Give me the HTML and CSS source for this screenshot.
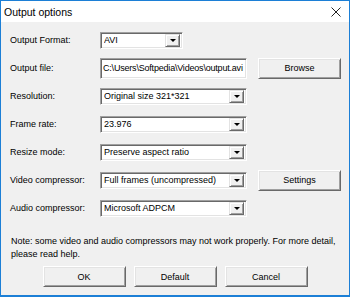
FILE: index.html
```html
<!DOCTYPE html>
<html lang="en">
<head>
    <meta charset="UTF-8">
    <meta name="viewport" content="width=device-width, initial-scale=1.0">
    <title>Output options</title>
    <link rel="stylesheet" href="styles.css">
</head>
<body>
    <div class="window">
        <div class="titlebar">
            <span class="title">Output options</span>
            <svg class="close" width="10" height="10" viewBox="0 0 10 10">
                <path d="M0.5 0.5 L9.5 9.5 M9.5 0.5 L0.5 9.5" stroke="#222" stroke-width="1" fill="none"/>
            </svg>
        </div>
        <div class="content">
            <div class="form">
                <div class="row">
                    <label>Output Format:</label>
                    <div class="combo short"><span class="value">AVI</span><span class="arrow"></span></div>
                </div>
                <div class="row">
                    <label>Output file:</label>
                    <div class="field">C:\Users\Softpedia\Videos\output.avi</div>
                    <button class="btn side">Browse</button>
                </div>
                <div class="row">
                    <label>Resolution:</label>
                    <div class="combo"><span class="value">Original size 321*321</span><span class="arrow"></span></div>
                </div>
                <div class="row">
                    <label>Frame rate:</label>
                    <div class="combo"><span class="value">23.976</span><span class="arrow"></span></div>
                </div>
                <div class="row">
                    <label>Resize mode:</label>
                    <div class="combo"><span class="value">Preserve aspect ratio</span><span class="arrow"></span></div>
                </div>
                <div class="row">
                    <label>Video compressor:</label>
                    <div class="combo"><span class="value">Full frames (uncompressed)</span><span class="arrow"></span></div>
                    <button class="btn side">Settings</button>
                </div>
                <div class="row">
                    <label>Audio compressor:</label>
                    <div class="combo"><span class="value">Microsoft ADPCM</span><span class="arrow"></span></div>
                </div>
            </div>
            <p class="note">Note: some video and audio compressors may not work properly. For more detail, please read help.</p>
            <div class="actions">
                <button class="btn">OK</button>
                <button class="btn">Default</button>
                <button class="btn">Cancel</button>
            </div>
        </div>
    </div>
</body>
</html>
```

FILE: styles.css
```css
* {
    box-sizing: border-box;
}
body {
    margin: 0;
    font-family: "Liberation Sans", Arial, sans-serif;
    font-size: 9px;
    color: #000;
}
.window {
    width: 350px;
    height: 297px;
    border: 1px solid #1c7fd6;
    border-bottom-width: 2px;
    background: #f0f0f0;
    display: flex;
    flex-direction: column;
}
.titlebar {
    height: 21px;
    background: #fff;
    display: flex;
    align-items: center;
    justify-content: space-between;
    padding: 0 8px 0 3px;
}
.title {
    font-size: 10.5px;
}
.close {
    display: block;
}
.content {
    flex: 1;
    padding: 4px 0 0 9px;
}
.row {
    height: 28px;
    display: flex;
    align-items: center;
}
.row label {
    width: 90px;
}
.combo {
    width: 147px;
    height: 17px;
    background: #fff;
    border: 1px solid;
    border-color: #a0a0a0 #fff #fff #a0a0a0;
    box-shadow: inset 1px 1px #696969, inset -1px -1px #e3e3e3;
    display: flex;
    align-items: center;
    padding: 0 2px 0 3px;
}
.combo.short {
    width: 83px;
}
.value {
    flex: 1;
    white-space: nowrap;
    overflow: hidden;
}
.arrow {
    width: 15px;
    height: 13px;
    background: #f0f0f0;
    border: 1px solid;
    border-color: #e3e3e3 #696969 #696969 #e3e3e3;
    box-shadow: inset 1px 1px #fff, inset -1px -1px #a0a0a0;
    position: relative;
}
.arrow::after {
    content: "";
    position: absolute;
    left: 4px;
    top: 4px;
    border-left: 3px solid transparent;
    border-right: 3px solid transparent;
    border-top: 3px solid #000;
}
.field {
    width: 147px;
    height: 21px;
    background: #fff;
    border: 1px solid;
    border-color: #a0a0a0 #fff #fff #a0a0a0;
    box-shadow: inset 1px 1px #696969, inset -1px -1px #e3e3e3;
    padding: 0 1px 0 2px;
    display: flex;
    align-items: center;
    white-space: nowrap;
    overflow: hidden;
    letter-spacing: -0.2px;
}
.btn {
    width: 83px;
    height: 21px;
    font: inherit;
    color: #000;
    background: #f0f0f0;
    border: 1px solid;
    border-color: #fff #696969 #696969 #fff;
    box-shadow: inset 1px 1px #e3e3e3, inset -1px -1px #a0a0a0;
    padding: 0;
}
.btn.side {
    margin-left: 11px;
}
.note {
    margin: 13px 0 0 1px;
    line-height: 13px;
    width: 325px;
}
.actions {
    display: flex;
    justify-content: center;
    gap: 8px;
    margin-top: 5px;
    padding-right: 9px;
}
```
